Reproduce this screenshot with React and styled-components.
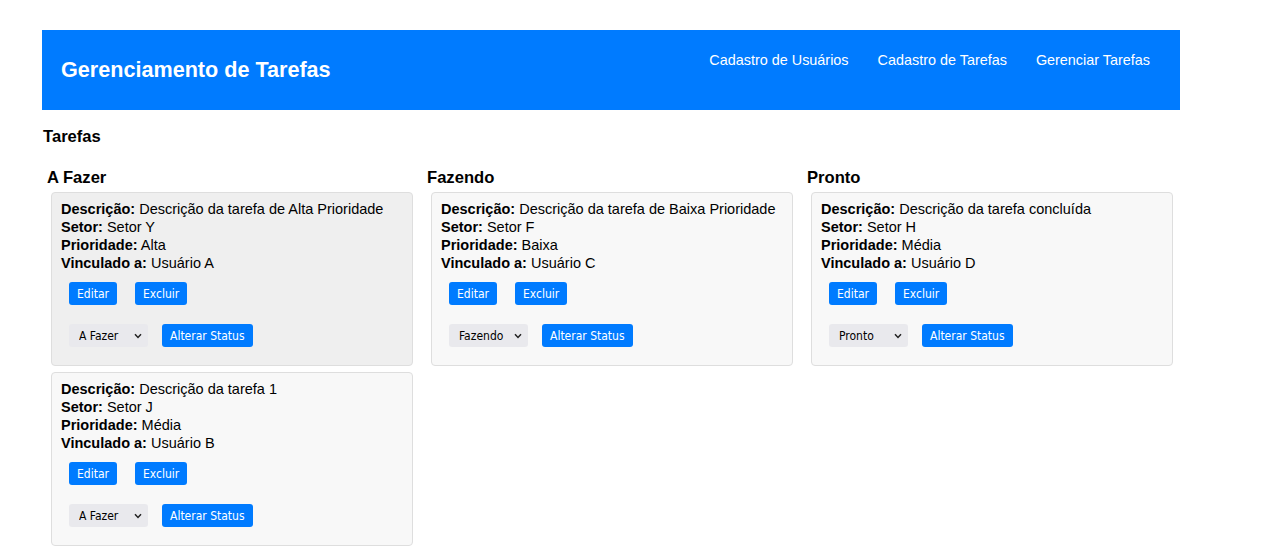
import React from "react";
import styled, { createGlobalStyle } from "styled-components";

const GlobalStyle = createGlobalStyle`
  body {
    margin: 0;
    background: #ffffff;
    font-family: "Liberation Sans", Arial, sans-serif;
    color: #000;
  }
`;

// styles
const Page = styled.div`
  padding: 30px 0 0 42px;
  width: 1138px;
`;

const Header = styled.header`
  height: 80px;
  background-color: #007bff;
  display: flex;
  justify-content: space-between;
  align-items: flex-start;
  padding: 0 30px 0 19px;
  box-sizing: border-box;
`;

const Title = styled.h1`
  margin: 0;
  align-self: center;
  color: #fff;
  font-size: 21.6px;
  font-weight: bold;
`;

const Nav = styled.nav`
  display: flex;
  gap: 29px;
  padding-top: 22px;
`;

const NavLink = styled.a`
  color: #fff;
  font-size: 14.4px;
  line-height: 16px;
  text-decoration: none;
`;

const SectionTitle = styled.h2`
  margin: 18px 0 0 1px;
  font-size: 16.6px;
  line-height: 18px;
  font-weight: bold;
`;

const Board = styled.div`
  display: grid;
  grid-template-columns: repeat(3, 380px);
  margin-top: 23px;
`;

const Column = styled.section`
  padding-left: 5px;
`;

const ColumnTitle = styled.h3`
  margin: 0 0 5px 0;
  font-size: 16.6px;
  line-height: 18px;
  font-weight: bold;
`;

const CardList = styled.div`
  display: flex;
  flex-direction: column;
  gap: 6px;
  margin-left: 4px;
`;

const Card = styled.div`
  width: 362px;
  box-sizing: border-box;
  background-color: ${(p) => (p.$active ? "#efefef" : "#f8f8f8")};
  border: 1px solid #dedede;
  border-radius: 4px;
  padding: 7px 9px 18px;
`;

const Line = styled.p`
  margin: 0;
  font-size: 14.5px;
  line-height: 18px;

  strong {
    font-weight: bold;
  }
`;

const Actions = styled.div`
  display: flex;
  gap: 18px;
  padding-left: 8px;
  margin-top: ${(p) => p.$top}px;
`;

const Button = styled.button`
  height: 23px;
  padding: 0 8px;
  border: none;
  border-radius: 3px;
  background-color: #007bff;
  color: #fff;
  font-family: "DejaVu Sans Condensed", "Liberation Sans", sans-serif;
  font-size: 12px;
  cursor: pointer;
`;

const SelectWrap = styled.div`
  position: relative;
  width: 79px;
  height: 23px;
  margin-right: -4px;

  svg {
    position: absolute;
    right: 6px;
    top: 9px;
    pointer-events: none;
  }
`;

const Select = styled.select`
  appearance: none;
  width: 100%;
  height: 100%;
  border: none;
  border-radius: 3px;
  background-color: #e9e9ed;
  padding: 0 0 0 10px;
  font-family: "DejaVu Sans Condensed", "Liberation Sans", sans-serif;
  font-size: 12px;
  color: #000;
`;

const Chevron = () => (
  <svg width="8" height="6" viewBox="0 0 8 6">
    <path d="M1 1.2 L4 4.4 L7 1.2" fill="none" stroke="#222" strokeWidth="1.5" />
  </svg>
);

const columns = [
  {
    title: "A Fazer",
    tasks: [
      { desc: "Descrição da tarefa de Alta Prioridade", setor: "Setor Y", prio: "Alta", user: "Usuário A", active: true },
      { desc: "Descrição da tarefa 1", setor: "Setor J", prio: "Média", user: "Usuário B" },
    ],
  },
  {
    title: "Fazendo",
    tasks: [
      { desc: "Descrição da tarefa de Baixa Prioridade", setor: "Setor F", prio: "Baixa", user: "Usuário C" },
    ],
  },
  {
    title: "Pronto",
    tasks: [
      { desc: "Descrição da tarefa concluída", setor: "Setor H", prio: "Média", user: "Usuário D" },
    ],
  },
];

const TaskCard = ({ task, status }) => (
  <Card $active={task.active}>
    <Line><strong>Descrição:</strong> {task.desc}</Line>
    <Line><strong>Setor:</strong> {task.setor}</Line>
    <Line><strong>Prioridade:</strong> {task.prio}</Line>
    <Line><strong>Vinculado a:</strong> {task.user}</Line>
    <Actions $top={10}>
      <Button>Editar</Button>
      <Button>Excluir</Button>
    </Actions>
    <Actions $top={19}>
      <SelectWrap>
        <Select defaultValue={status}>
          <option>A Fazer</option>
          <option>Fazendo</option>
          <option>Pronto</option>
        </Select>
        <Chevron />
      </SelectWrap>
      <Button>Alterar Status</Button>
    </Actions>
  </Card>
);

const App = () => {
  return (
    <Page>
      <GlobalStyle />
      <Header>
        <Title>Gerenciamento de Tarefas</Title>
        <Nav>
          <NavLink href="#">Cadastro de Usuários</NavLink>
          <NavLink href="#">Cadastro de Tarefas</NavLink>
          <NavLink href="#">Gerenciar Tarefas</NavLink>
        </Nav>
      </Header>
      <SectionTitle>Tarefas</SectionTitle>
      <Board>
        {columns.map((col) => (
          <Column key={col.title}>
            <ColumnTitle>{col.title}</ColumnTitle>
            <CardList>
              {col.tasks.map((task, index) => (
                <TaskCard key={index} task={task} status={col.title} />
              ))}
            </CardList>
          </Column>
        ))}
      </Board>
    </Page>
  );
};

export default App;
